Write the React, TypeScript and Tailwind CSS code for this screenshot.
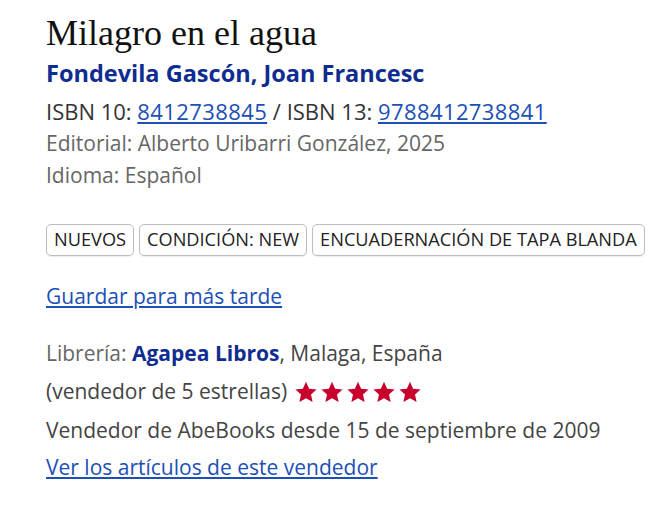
const Stars = () => (
  <span className="inline-flex items-center gap-[2px] ml-[7px]">
    {[0, 1, 2, 3, 4].map((i) => (
      <svg key={i} viewBox="0 0 24 24" className="w-[24px] h-[24px]" fill="#c8002c">
        <path d="M12 1.8l3.1 6.9 7.5.8-5.6 5.1 1.6 7.4L12 18.2 5.4 22l1.6-7.4L1.4 9.5l7.5-.8z" />
      </svg>
    ))}
  </span>
);

const Badge = ({ label }: { label: string }) => (
  <span className="border border-[#bdbdbd] rounded-[5px] px-[7px] h-[32px] flex items-center text-[18.2px] text-[#222] shadow-[0_1px_1px_rgba(0,0,0,0.08)]">
    {label}
  </span>
);

const App = () => {
  return (
    <div className="w-[663px] h-[511px] bg-white pl-[46px] pt-[12px] font-['Open_Sans',sans-serif] text-[#333]">
      <h1 className="font-['Liberation_Serif',serif] text-[36px] leading-[42px] text-[#111]">Milagro en el agua</h1>
      <div className="text-[23.5px] leading-[32px] font-bold text-[#0f2c91] mt-[3px]">Fondevila Gascón, Joan Francesc</div>

      <div className="text-[21px] leading-[32px] mt-[6px]">
        <div className="text-[#333] text-[22px]">
          ISBN 10: <a className="text-[#1c4fb6] underline tracking-[0.4px]" href="#">8412738845</a> / ISBN 13:{' '}
          <a className="text-[#1c4fb6] underline tracking-[0.4px]" href="#">9788412738841</a>
        </div>
        <div className="text-[#666]">Editorial: Alberto Uribarri González, 2025</div>
        <div className="text-[#666]">Idioma: Español</div>
      </div>

      <div className="flex gap-[5px] mt-[33px]">
        <Badge label="NUEVOS" />
        <Badge label="CONDICIÓN: NEW" />
        <Badge label="ENCUADERNACIÓN DE TAPA BLANDA" />
      </div>

      <div className="mt-[24px] text-[21px] leading-[32px]">
        <a className="text-[#1c4fb6] underline" href="#">Guardar para más tarde</a>
      </div>

      <div className="mt-[23px] text-[21px] leading-[37px]">
        <div className="text-[#666]">
          Librería: <span className="font-bold text-[#0f2c91]">Agapea Libros</span>
          <span className="text-[#444]">, Malaga, España</span>
        </div>
        <div className="flex items-center text-[#444] h-[39px]">
          (vendedor de 5 estrellas)
          <Stars />
        </div>
        <div className="text-[#444] mt-[1px]">Vendedor de AbeBooks desde 15 de septiembre de 2009</div>
        <div>
          <a className="text-[#1c4fb6] underline" href="#">Ver los artículos de este vendedor</a>
        </div>
      </div>
    </div>
  );
};

export default App;
